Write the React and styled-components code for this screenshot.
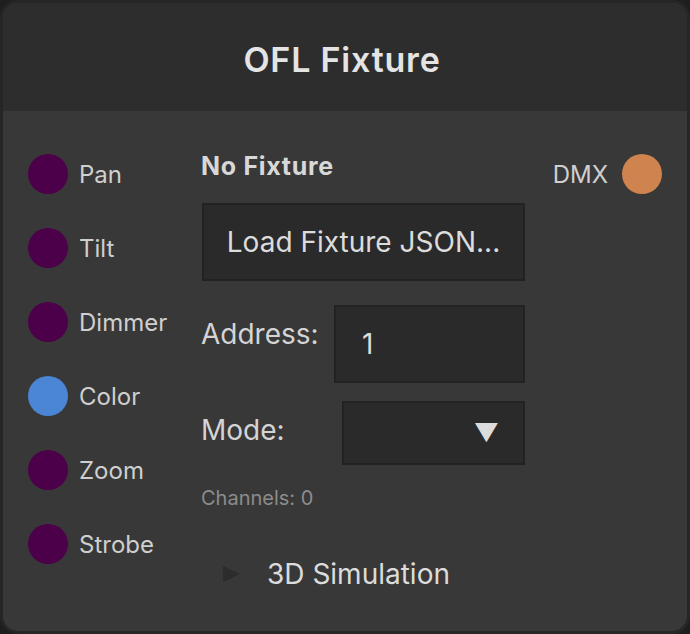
import React from "react";
import styled, { createGlobalStyle } from "styled-components";

const GlobalStyle = createGlobalStyle`
  html, body { margin: 0; padding: 0; background: #1e1e1e; }
  body { font-family: Inter, "Noto Sans", sans-serif; }
  * { box-sizing: border-box; }
`;

const Node = styled.div`
  width: 690px;
  height: 634px;
  background: #383838;
  border: 3px solid #262626;
  border-radius: 18px;
  overflow: hidden;
  display: flex;
  flex-direction: column;
`;

const Header = styled.div`
  height: 108px;
  flex: none;
  background: #2d2d2d;
  display: flex;
  align-items: center;
  justify-content: center;
  padding: 5px 6px 0 0;
  color: #e4e4e4;
  font-size: 34px;
  font-weight: 600;
  line-height: 40px;
  letter-spacing: 0.8px;
`;

const Body = styled.div`
  flex: 1;
  display: grid;
  grid-template-columns: 198px 327px 1fr;
`;

const Ports = styled.div`
  display: flex;
  flex-direction: column;
  padding: 26px 0 0 25px;
`;

const Port = styled.div`
  height: 74px;
  display: flex;
  align-items: center;
  justify-content: ${(p) => (p.$out ? "flex-end" : "flex-start")};
  gap: ${(p) => (p.$out ? 14 : 11)}px;
  color: #cfcfcf;
  font-size: 24px;
`;

const Dot = styled.span`
  width: 40px;
  height: 40px;
  border-radius: 50%;
  flex: none;
  background: ${(p) => p.$color};
`;

const Outputs = styled.div`
  display: flex;
  flex-direction: column;
  padding: 26px 25px 0 0;
`;

const Controls = styled.div`
  display: flex;
  flex-direction: column;
  padding-top: 40px;
`;

const Title = styled.div`
  font-size: 25px;
  font-weight: 700;
  color: #d8d8d8;
  line-height: 30px;
  letter-spacing: 0.7px;
`;

const Box = styled.div`
  background: #2a2a2a;
  border: 2px solid #222222;
  color: #dcdcdc;
  font-size: 28px;
  display: flex;
  align-items: center;
`;

const LoadButton = styled(Box)`
  margin: 22px 0 0 1px;
  width: 323px;
  height: 78px;
  justify-content: center;
`;

const Row = styled.div`
  display: flex;
  align-items: flex-start;
  margin-top: ${(p) => p.$top}px;
`;

const Label = styled.div`
  width: ${(p) => p.$w}px;
  flex: none;
  color: #d4d4d4;
  font-size: 28px;
  line-height: 32px;
  padding-top: 13px;
`;

const AddressInput = styled(Box)`
  width: 191px;
  height: 78px;
  padding-left: 26px;
`;

const ModeSelect = styled(Box)`
  width: 183px;
  height: 64px;
  justify-content: flex-end;
  padding-right: 24px;
  font-size: 25px;
`;

const Info = styled.div`
  margin-top: 21px;
  font-size: 20px;
  line-height: 24px;
  color: #8c8c8c;
`;

const Toggle = styled.div`
  margin-top: 48px;
  display: flex;
  align-items: center;
  padding-left: 22px;
  gap: 27px;
  color: #dcdcdc;
  font-size: 28px;
  line-height: 32px;
`;

const Caret = styled.span`
  width: 0;
  height: 0;
  border-top: 8px solid transparent;
  border-bottom: 8px solid transparent;
  border-left: 17px solid #2c2c2c;
`;

const inputs = [
  ["Pan", "#4b0049"],
  ["Tilt", "#4b0049"],
  ["Dimmer", "#4b0049"],
  ["Color", "#4a86d4"],
  ["Zoom", "#4b0049"],
  ["Strobe", "#4b0049"],
];

export default function App() {
  return (
    <>
      <GlobalStyle />
      <Node>
        <Header>OFL Fixture</Header>
        <Body>
          <Ports>
            {inputs.map(([name, color]) => (
              <Port key={name}>
                <Dot $color={color} />
                {name}
              </Port>
            ))}
          </Ports>
          <Controls>
            <Title>No Fixture</Title>
            <LoadButton>Load Fixture JSON...</LoadButton>
            <Row $top={24}>
              <Label $w={133}>Address:</Label>
              <AddressInput>1</AddressInput>
            </Row>
            <Row $top={18}>
              <Label $w={141}>Mode:</Label>
              <ModeSelect>▼</ModeSelect>
            </Row>
            <Info>Channels: 0</Info>
            <Toggle>
              <Caret />
              3D Simulation
            </Toggle>
          </Controls>
          <Outputs>
            <Port $out>
              DMX
              <Dot $color="#cf834f" />
            </Port>
          </Outputs>
        </Body>
      </Node>
    </>
  );
}
